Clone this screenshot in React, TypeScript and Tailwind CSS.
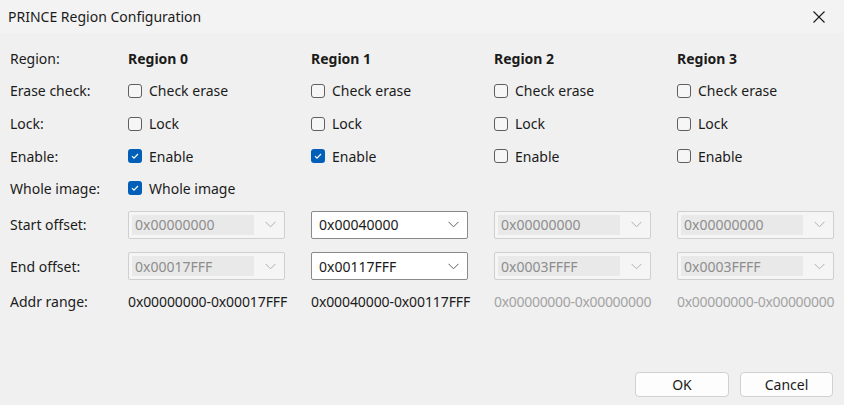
import React from "react";

const font = { fontFamily: '"Noto Sans", "Open Sans", Arial, sans-serif' };

function Check({ checked, label }: { checked?: boolean; label: string }) {
  return (
    <div className="flex items-center">
      {checked ? (
        <span className="w-[14px] h-[14px] rounded-[3px] bg-[#005fb8] flex items-center justify-center">
          <svg width="10" height="10" viewBox="0 0 10 10">
            <path d="M2 5.2 L4 7.2 L8 3" fill="none" stroke="white" strokeWidth="1.2" />
          </svg>
        </span>
      ) : (
        <span className="w-[14px] h-[14px] rounded-[3px] border border-[#5f5f5f] bg-[#f6f6f6]" />
      )}
      <span className="ml-[7px]">{label}</span>
    </div>
  );
}

function Combo({ value, enabled }: { value: string; enabled?: boolean }) {
  return enabled ? (
    <div className="w-[157px] h-[28px] border border-[#8a8a8a] bg-white rounded-[2px] flex items-center pl-[7px] pr-[8px]">
      <span className="flex-1 text-[#1a1a1a]">{value}</span>
      <svg width="11" height="7" viewBox="0 0 11 7">
        <path d="M0.5 0.8 L5.5 5.8 L10.5 0.8" fill="none" stroke="#606060" strokeWidth="1" />
      </svg>
    </div>
  ) : (
    <div className="w-[157px] h-[28px] border border-[#cfcfcf] bg-[#f5f5f5] rounded-[2px] flex items-center p-[3px] pr-[8px]">
      <span className="flex-1 h-full bg-[#e9e9e9] flex items-center pl-[3px] text-[#8d8d8d]">{value}</span>
      <span className="w-[22px] flex justify-end">
        <svg width="11" height="7" viewBox="0 0 11 7">
          <path d="M0.5 0.8 L5.5 5.8 L10.5 0.8" fill="none" stroke="#b0b0b0" strokeWidth="1" />
        </svg>
      </span>
    </div>
  );
}

function Row({ label, h, children }: { label: string; h: string; children: React.ReactNode }) {
  return (
    <div className={`flex items-center ${h}`}>
      <div className="w-[118px] shrink-0">{label}</div>
      {children}
    </div>
  );
}

const Cell = ({ children }: { children?: React.ReactNode }) => (
  <div className="w-[183px] shrink-0 flex items-center">{children}</div>
);

export default function App() {
  const regions = [0, 1, 2, 3];
  const enables = [true, true, false, false];
  const starts = ["0x00000000", "0x00040000", "0x00000000", "0x00000000"];
  const ends = ["0x00017FFF", "0x00117FFF", "0x0003FFFF", "0x0003FFFF"];
  const ranges = [
    "0x00000000-0x00017FFF",
    "0x00040000-0x00117FFF",
    "0x00000000-0x00000000",
    "0x00000000-0x00000000",
  ];
  return (
    <div
      style={font}
      className="w-[844px] h-[405px] bg-[#f0f0f0] text-[14px] text-[#1b1b1b] flex flex-col overflow-hidden"
    >
      <div className="h-[33px] bg-[#f3f3f3] flex items-center pl-[8px]">
        <span className="flex-1 text-[14px]">PRINCE Region Configuration</span>
        <div className="w-[46px] h-[33px] flex items-center justify-center mr-[2px]">
          <svg width="12" height="12" viewBox="0 0 12 12">
            <path d="M0.5 0.5 L11.5 11.5 M11.5 0.5 L0.5 11.5" stroke="#1a1a1a" strokeWidth="1.1" />
          </svg>
        </div>
      </div>
      <div className="flex flex-col pl-[10px] pt-[9px]">
        <Row label="Region:" h="h-[32px]">
          {regions.map((r) => (
            <Cell key={r}>
              <span className="font-bold">Region {r}</span>
            </Cell>
          ))}
        </Row>
        <Row label="Erase check:" h="h-[33px]">
          {regions.map((r) => (
            <Cell key={r}>
              <Check label="Check erase" />
            </Cell>
          ))}
        </Row>
        <Row label="Lock:" h="h-[33px]">
          {regions.map((r) => (
            <Cell key={r}>
              <Check label="Lock" />
            </Cell>
          ))}
        </Row>
        <Row label="Enable:" h="h-[32px]">
          {regions.map((r) => (
            <Cell key={r}>
              <Check checked={enables[r]} label="Enable" />
            </Cell>
          ))}
        </Row>
        <Row label="Whole image:" h="h-[32px]">
          <Cell>
            <Check checked label="Whole image" />
          </Cell>
        </Row>
        <Row label="Start offset:" h="h-[41px]">
          {regions.map((r) => (
            <Cell key={r}>
              <Combo value={starts[r]} enabled={r === 1} />
            </Cell>
          ))}
        </Row>
        <Row label="End offset:" h="h-[42px]">
          {regions.map((r) => (
            <Cell key={r}>
              <Combo value={ends[r]} enabled={r === 1} />
            </Cell>
          ))}
        </Row>
        <Row label="Addr range:" h="h-[28px]">
          {regions.map((r) => (
            <Cell key={r}>
              <span
                className={
                  r < 2 ? "text-[#1b1b1b] tracking-[-0.1px]" : "text-[#a3a3a3] tracking-[-0.3px]"
                }
              >
                {ranges[r]}
              </span>
            </Cell>
          ))}
        </Row>
      </div>
      <div className="flex-1" />
      <div className="flex justify-end gap-[11px] pr-[11px] pb-[8px]">
        <button className="w-[94px] h-[25px] bg-[#fdfdfd] border border-[#d0d0d0] rounded-[4px] text-[#1b1b1b]">
          OK
        </button>
        <button className="w-[93px] h-[25px] bg-[#fdfdfd] border border-[#d0d0d0] rounded-[4px] text-[#1b1b1b]">
          Cancel
        </button>
      </div>
    </div>
  );
}
